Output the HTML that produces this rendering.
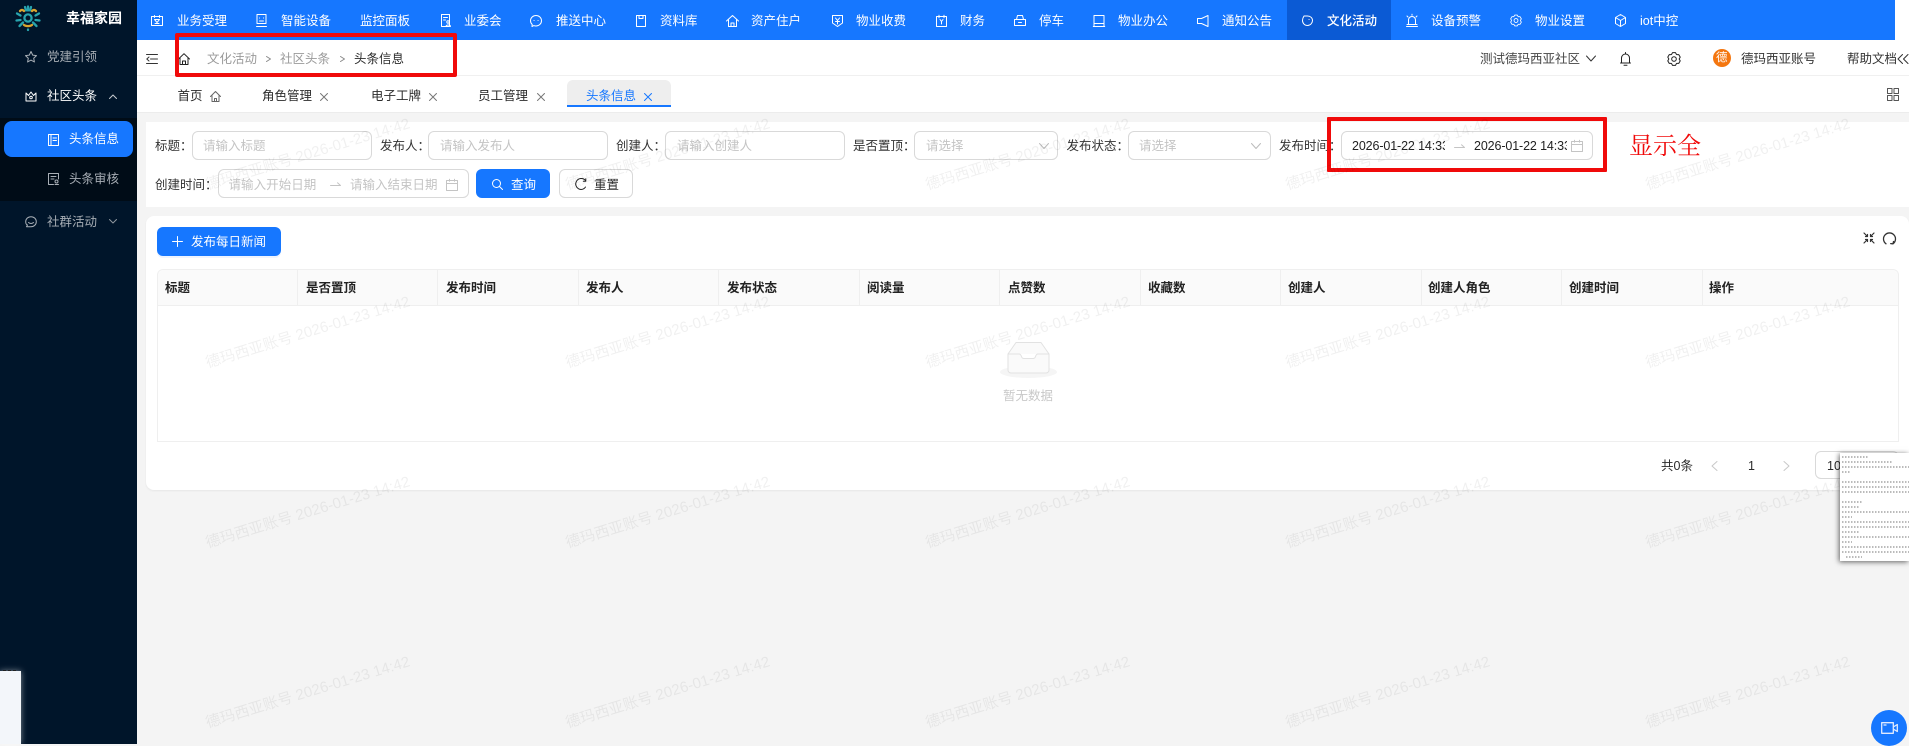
<!DOCTYPE html>
<html lang="zh"><head><meta charset="utf-8"><title>头条信息</title>
<style>
html,body{margin:0;padding:0}
body{width:1909px;height:744px;position:relative;overflow:hidden;background:#f4f4f4;font-family:"Liberation Sans","Noto Sans CJK SC",sans-serif;font-size:12.5px;color:#2b2b2b}
.a{position:absolute;box-sizing:border-box}
.t{position:absolute;line-height:0;white-space:nowrap}
svg{position:absolute;overflow:visible;fill:none;stroke:currentColor;stroke-width:1;stroke-linecap:round;stroke-linejoin:round}
.w{color:#fff}.ph{color:#c4c4c4}.g{color:#9a9a9a}
.inp{position:absolute;box-sizing:border-box;background:#fff;border:1px solid #d9d9d9;border-radius:6px;height:29px;top:131px}
.r2{top:169px}
.b{font-weight:700;color:#222}
.sep{position:absolute;top:270px;width:1px;height:36px;background:#efefef}
.wm{position:absolute;width:260px;height:20px;line-height:20px;text-align:center;font-size:15px;color:rgba(0,0,0,.06);transform:rotate(-17deg);white-space:nowrap;pointer-events:none}
</style></head><body>

<!-- sidebar -->
<div class="a" style="left:0;top:0;width:137px;height:744px;background:#00152a"></div>
<div class="a" style="left:0;top:118px;width:137px;height:83px;background:#000c17"></div>
<div class="a" style="left:4px;top:121px;width:129px;height:36px;border-radius:8px;background:#1677ff"></div>
<svg style="left:15px;top:5px;stroke-width:2.3" width="26" height="26" viewBox="0 0 26 26">
<circle cx="13" cy="13" r="3.6" stroke="#27a3ad"/>
<path d="M10 2l1 3.500M13 1.500v4M16 2l-1 3.500M2 8.500l3.500 2M24 8.500l-3.500 2" stroke="#27a3ad"/>
<path d="M5 6c1.500-1.500 2.500-1.500 4 0M17 6c1.500-1.500 2.500-1.500 4 0" stroke="#d9a530"/>
<path d="M1.500 15.500l4-.5M24.500 15.500l-4-.5M4.500 21l3.500-3.500M21.500 21L18 17.500" stroke="#27a3ad"/>
<path d="M9 20c2 1.500 6 1.500 8 0" stroke="#d9a530"/><path d="M13 24.500v.5" stroke="#27a3ad"/>
</svg>
<span class="t w" style="left:66px;top:18px;font-size:14px;font-weight:700">幸福家园</span>
<svg style="left:25px;top:51px;color:#a9b0b7" width="12" height="12" viewBox="0 0 12 12"><path d="M6 .5l1.700 3.600 3.800.5-2.800 2.600.7 3.800L6 9.100 2.600 11l.7-3.800L.5 4.600l3.800-.5z"/></svg>
<span class="t" style="left:47px;top:57px;color:#a6adb4">党建引领</span>
<svg style="left:25px;top:91px;color:#fff" width="12" height="11" viewBox="0 0 12 11"><path d="M1 2l2.500 2.500L6 1l2.500 3.500L11 2v8H1z"/><circle cx="6" cy="6.500" r="1.300"/></svg>
<span class="t w" style="left:47px;top:96px">社区头条</span>
<svg style="left:109px;top:94px;color:#c5cad0" width="8" height="5" viewBox="0 0 8 5"><path d="M.5 4.500L4 1l3.500 3.500"/></svg>
<svg style="left:48px;top:134px;color:#fff" width="11" height="12" viewBox="0 0 11 12"><path d="M.5.500h10v11H.5zM3 .5v11M5 4h3.500M5 6.500h3.500"/></svg>
<span class="t w" style="left:69px;top:139px">头条信息</span>
<svg style="left:48px;top:173px;color:#a9b0b7" width="11" height="12" viewBox="0 0 11 12"><path d="M10.500 6V.5H.5v11h5M3 3.500h5M3 6h3"/><circle cx="8.500" cy="8.500" r="1.500"/><path d="M7 11.500h3.500"/></svg>
<span class="t" style="left:69px;top:179px;color:#a6adb4">头条审核</span>
<svg style="left:25px;top:216px;color:#a9b0b7" width="12" height="12" viewBox="0 0 12 12"><path d="M6 .7c3 0 5.300 2.200 5.300 5s-2.300 5-5.300 5H1.500l1-1.700C1.200 8.500.7 7.200.7 5.700.7 2.900 3 .7 6 .7zM3.500 6.500c1.500 1.200 3.500 1.200 5 0"/></svg>
<span class="t" style="left:47px;top:222px;color:#a6adb4">社群活动</span>
<svg style="left:109px;top:219px;color:#8f979f" width="8" height="5" viewBox="0 0 8 5"><path d="M.5.500L4 4 7.500.5"/></svg>
<div class="a" style="left:0;top:671px;width:21px;height:73px;background:#f3f6fa;box-shadow:0 0 6px rgba(255,255,255,.5)"></div>
<div class="a" style="left:3px;top:670px;width:15px;height:1px;background:repeating-linear-gradient(90deg,#222 0 3px,transparent 3px 5px)"></div>

<!-- top nav -->
<div class="a" style="left:137px;top:0;width:1758px;height:40px;background:#1677ff"></div>
<div class="a" style="left:1287px;top:0;width:104px;height:40px;background:#0b5ad4"></div>
<div class="a" style="left:1895px;top:0;width:14px;height:40px;background:#fff"></div>
<div class="a w" style="left:0;top:0;width:0;height:0">
<svg style="left:151px;top:15px" width="12" height="11" viewBox="0 0 12 11"><path d="M.5 1.500h11v9H.5zM3.500.5v2M8.500.5v2M3.500 4.500h5l-2.500 3zM4 8.500h4"/></svg>
<span class="t" style="left:177px;top:21px">业务受理</span>
<svg style="left:256px;top:14px" width="11" height="13" viewBox="0 0 11 13"><path d="M1 .5h9v9H1zM.5 12.500h10M3.500 4h.1M7.500 4h.1M3.500 7h4"/></svg>
<span class="t" style="left:281px;top:21px">智能设备</span>
<span class="t" style="left:360px;top:21px">监控面板</span>
<svg style="left:441px;top:14px" width="10" height="13" viewBox="0 0 10 13"><path d="M.5.500h8v12H.5zM2.500 3.500h4M2.500 6h2"/><circle cx="7" cy="8" r="1.200"/><path d="M5 12.500c0-2 4.500-2 4.500 0"/></svg>
<span class="t" style="left:464px;top:21px">业委会</span>
<svg style="left:530px;top:15px" width="12" height="12" viewBox="0 0 12 12"><path d="M6 .5c3 0 5.500 2.300 5.500 5.200S9 11 6 11c-.8 0-1.500-.1-2.200-.4L2 11.500l.2-2C1.200 8.500.5 7.200.5 5.700.5 2.800 3 .5 6 .5zM4 5.500h.1M8 5.500h.1"/></svg>
<span class="t" style="left:556px;top:21px">推送中心</span>
<svg style="left:636px;top:15px" width="10" height="12" viewBox="0 0 10 12"><path d="M.5.500h9v11H.5zM3 .5v3h4v-3"/></svg>
<span class="t" style="left:660px;top:21px">资料库</span>
<svg style="left:726px;top:15px" width="13" height="12" viewBox="0 0 13 12"><path d="M.5 6l6-5.500 6 5.500M2.500 5v6.500h8V5M5 11.500V8h3v3.500"/></svg>
<span class="t" style="left:751px;top:21px">资产住户</span>
<svg style="left:832px;top:15px" width="11" height="12" viewBox="0 0 11 12"><path d="M.5.500h10v7.500l-5 3.500-5-3.500zM3.500 3l2 2.500 2-2.500M5.500 5.500v3.500M3.500 6.500h4"/></svg>
<span class="t" style="left:856px;top:21px">物业收费</span>
<svg style="left:936px;top:15px" width="11" height="12" viewBox="0 0 11 12"><path d="M.5 1.500h10v10H.5zM3 .3v2.500M8 .3v2.500M4 4.500l1.500 2 1.500-2M5.500 6.500v2.500"/></svg>
<span class="t" style="left:960px;top:21px">财务</span>
<svg style="left:1014px;top:15px" width="12" height="11" viewBox="0 0 12 11"><path d="M2.500 4.500L3.500.5h5l1 4M.5 4.500h11v6H.5zM4.500 7.500h3"/></svg>
<span class="t" style="left:1039px;top:21px">停车</span>
<svg style="left:1093px;top:15px" width="12" height="12" viewBox="0 0 12 12"><path d="M1 .5h10v8H1zM.3 11.500h11.400M1 9v2.500M11 9v2.500"/></svg>
<span class="t" style="left:1118px;top:21px">物业办公</span>
<svg style="left:1197px;top:15px" width="12" height="12" viewBox="0 0 12 12"><path d="M11 .5v11L4.500 8.500H.5v-5h4z"/></svg>
<span class="t" style="left:1222px;top:21px">通知公告</span>
<svg style="left:1302px;top:15px" width="11" height="11" viewBox="0 0 11 11"><path d="M2 1h3.500c3 0 5 2 5 4.500s-2.200 5-5 5-5-2.200-5-5c0-1.500.5-3 1.500-4.500zM7 4.500h.1"/></svg>
<span class="t" style="left:1327px;top:21px;font-weight:500">文化活动</span>
<svg style="left:1406px;top:14px" width="12" height="13" viewBox="0 0 12 13"><path d="M2.500 10V6a3.500 3.500 0 017 0v4M1 10.500h10M.5 12.500h11M6 .3v1M1 2l1 1M11 2l-1 1"/></svg>
<span class="t" style="left:1431px;top:21px">设备预警</span>
<svg style="left:1510px;top:14px" width="12" height="13" viewBox="0 0 14 14"><path d="M5.540.67h2.920l.98 1.740.32.180 2 -.02 1.460 2.530-1 1.720v.36l1 1.720-1.460 2.530-2-.02-.32.180-.98 1.740H5.540l-.98-1.740-.32-.180-2 .02L.78 8.900l1-1.720v-.36l-1-1.720 1.470-2.530 2 .02.32-.180z"/><circle cx="7" cy="7" r="2.300"/></svg>
<span class="t" style="left:1535px;top:21px">物业设置</span>
<svg style="left:1615px;top:14px" width="11" height="13" viewBox="0 0 11 13"><path d="M5.500.5l5 3v6l-5 3-5-3v-6zM.5 3.500l5 3 5-3M5.500 6.500v6"/></svg>
<span class="t" style="left:1640px;top:21px">iot中控</span>
</div>

<!-- breadcrumb row -->
<div class="a" style="left:137px;top:40px;width:1772px;height:36px;background:#fff;border-bottom:1px solid #f0f0f0"></div>
<svg style="left:146px;top:54px;color:#333" width="12" height="10" viewBox="0 0 12 10"><path d="M.5.500h11M4.500 5h7M.5 9.500h11M3 3L.8 5 3 7"/></svg>
<svg style="left:178px;top:53px;color:#222" width="12" height="12" viewBox="0 0 12 12"><path d="M.5 6L6 .7 11.500 6M2 5v6.500h8V5M4.500 11.500V8h3v3.500"/></svg>
<span class="t g" style="left:207px;top:59px">文化活动</span>
<svg style="left:266px;top:56px;color:#888" width="5" height="6" viewBox="0 0 5 6"><path d="M.5.500L4.500 3 .5 5.500"/></svg>
<span class="t g" style="left:280px;top:59px">社区头条</span>
<svg style="left:340px;top:56px;color:#888" width="5" height="6" viewBox="0 0 5 6"><path d="M.5.500L4.500 3 .5 5.500"/></svg>
<span class="t" style="left:354px;top:59px">头条信息</span>
<span class="t" style="left:1480px;top:59px;color:#444">测试德玛西亚社区</span>
<svg style="left:1586px;top:55px;color:#333" width="10" height="7" viewBox="0 0 10 7"><path d="M.5 1L5 6l4.500-5"/></svg>
<svg style="left:1620px;top:52px;color:#222" width="11" height="14" viewBox="0 0 11 14"><path d="M1.500 10.500V6a4 4 0 018 0v4.500M.5 11h10M4 13.300h3M5.500.5v1.500"/></svg>
<svg style="left:1667px;top:52px;color:#222" width="14" height="14" viewBox="0 0 14 14"><path d="M5.540.67h2.920l.98 1.740.32.180 2 -.02 1.460 2.530-1 1.720v.36l1 1.720-1.460 2.530-2-.02-.32.180-.98 1.740H5.540l-.98-1.740-.32-.180-2 .02L.78 8.900l1-1.720v-.36l-1-1.720 1.470-2.530 2 .02.32-.180z"/><circle cx="7" cy="7" r="2.300"/></svg>
<div class="a" style="left:1713px;top:49px;width:18px;height:18px;border-radius:50%;background:#f4760f"></div>
<span class="t w" style="left:1716px;top:58px;font-size:11.500px">德</span>
<span class="t" style="left:1741px;top:59px;color:#333">德玛西亚账号</span>
<span class="t" style="left:1847px;top:59px;color:#333">帮助文档</span>
<svg style="left:1897px;top:54px;color:#333" width="12" height="10" viewBox="0 0 12 10"><path d="M5.500.5L1 5l4.500 4.500M11 .5L6.500 5l4.500 4.500"/></svg>

<!-- tabs row -->
<div class="a" style="left:137px;top:76px;width:1772px;height:37px;background:#fff;border-bottom:1px solid #ececec"></div>
<span class="t" style="left:177.500px;top:96px">首页</span>
<svg style="left:210px;top:91px;color:#666" width="11" height="11" viewBox="0 0 11 11"><path d="M.5 5.500l5-5 5 5M2 4.500v6h7v-6M4.500 10.500V7.500h2v3"/></svg>
<span class="t" style="left:262px;top:96px">角色管理</span>
<svg style="left:320px;top:93px;color:#777" width="8" height="8" viewBox="0 0 8 8"><path d="M.5.500l7 7M7.500.5l-7 7"/></svg>
<span class="t" style="left:371px;top:96px">电子工牌</span>
<svg style="left:429px;top:93px;color:#777" width="8" height="8" viewBox="0 0 8 8"><path d="M.5.500l7 7M7.500.5l-7 7"/></svg>
<span class="t" style="left:478px;top:96px">员工管理</span>
<svg style="left:537px;top:93px;color:#777" width="8" height="8" viewBox="0 0 8 8"><path d="M.5.500l7 7M7.500.5l-7 7"/></svg>
<div class="a" style="left:567px;top:80px;width:104px;height:27px;background:#eee;border-radius:6px 6px 0 0;border-bottom:2px solid #1677ff"></div>
<span class="t" style="left:586px;top:95.500px;color:#1677ff">头条信息</span>
<svg style="left:644px;top:93px;color:#1677ff" width="8" height="8" viewBox="0 0 8 8"><path d="M.5.500l7 7M7.500.5l-7 7"/></svg>
<svg style="left:1887px;top:88px;color:#555" width="12" height="13" viewBox="0 0 12 13"><path d="M.5.500h4.500v5H.5zM7 .5h4.500v5H7zM.5 7.500h4.500v5H.5zM7 7.500h4.500v5H7z"/></svg>

<!-- filter card -->
<div class="a" style="left:146px;top:122px;width:1763px;height:85px;background:#fff"></div>
<span class="t" style="left:155px;top:146px;color:#333">标题：</span>
<div class="inp" style="left:192px;width:180px"></div><span class="t ph" style="left:203px;top:146px">请输入标题</span>
<span class="t" style="left:380px;top:146px;color:#333">发布人：</span>
<div class="inp" style="left:428px;width:180px"></div><span class="t ph" style="left:440px;top:146px">请输入发布人</span>
<span class="t" style="left:616px;top:146px;color:#333">创建人：</span>
<div class="inp" style="left:665px;width:180px"></div><span class="t ph" style="left:677px;top:146px">请输入创建人</span>
<span class="t" style="left:853px;top:146px;color:#333">是否置顶：</span>
<div class="inp" style="left:914px;width:144px"></div><span class="t ph" style="left:926px;top:146px">请选择</span>
<svg style="left:1039px;top:143px;color:#bbb" width="10" height="6" viewBox="0 0 10 6"><path d="M.5.500L5 5.500 9.500.5"/></svg>
<span class="t" style="left:1066.500px;top:146px;color:#333">发布状态：</span>
<div class="inp" style="left:1128px;width:143px"></div><span class="t ph" style="left:1139px;top:146px">请选择</span>
<svg style="left:1251px;top:143px;color:#bbb" width="10" height="6" viewBox="0 0 10 6"><path d="M.5.500L5 5.500 9.500.5"/></svg>
<span class="t" style="left:1279px;top:146px;color:#333">发布时间：</span>
<div class="inp" style="left:1341px;width:252px"></div>
<div class="a" style="left:1352px;top:135px;width:93px;height:22px;overflow:hidden"><span class="t" style="left:0;top:11px;color:#222;letter-spacing:-.12px">2026-01-22 14:33:00</span></div>
<svg style="left:1454px;top:144px;color:#c4c4c4" width="11" height="4" viewBox="0 0 11 4"><path d="M.5 3.500h10L7.500.8"/></svg>
<div class="a" style="left:1474px;top:135px;width:93px;height:22px;overflow:hidden"><span class="t" style="left:0;top:11px;color:#222;letter-spacing:-.12px">2026-01-22 14:33:00</span></div>
<svg style="left:1571px;top:140px;color:#c4c4c4" width="12" height="12" viewBox="0 0 12 12"><path d="M.5 1.500h11v10H.5zM.5 4.500h11M3.500.3v2M8.500.3v2"/></svg>
<div class="a" style="left:1327px;top:117px;width:280px;height:55px;border:4px solid #f00a0a;border-radius:1px"></div>
<span class="t" style="left:1629px;top:147px;font-family:'Liberation Serif','Noto Serif CJK SC',serif;font-size:24px;color:#f00a0a">显示全</span>

<span class="t" style="left:155px;top:184.500px;color:#333">创建时间：</span>
<div class="inp r2" style="left:217.500px;width:251px"></div>
<span class="t ph" style="left:228.500px;top:184.500px;font-size:12.500px;letter-spacing:.05px">请输入开始日期</span>
<svg style="left:330px;top:182px;color:#c4c4c4" width="11" height="4" viewBox="0 0 11 4"><path d="M.5 3.500h10L7.500.8"/></svg>
<span class="t ph" style="left:350px;top:184.500px">请输入结束日期</span>
<svg style="left:446px;top:179px;color:#c4c4c4" width="12" height="12" viewBox="0 0 12 12"><path d="M.5 1.500h11v10H.5zM.5 4.500h11M3.500.3v2M8.500.3v2"/></svg>
<div class="a" style="left:476px;top:169px;width:74px;height:29px;background:#1677ff;border-radius:6px"></div>
<svg style="left:492px;top:179px;color:#fff" width="11" height="11" viewBox="0 0 11 11"><circle cx="4.500" cy="4.500" r="4"/><path d="M7.500 7.500l3 3"/></svg>
<span class="t w" style="left:511px;top:184.500px">查询</span>
<div class="a" style="left:559px;top:169px;width:74px;height:29px;background:#fff;border:1px solid #d9d9d9;border-radius:6px"></div>
<svg style="left:575px;top:178px;color:#222" width="12" height="12" viewBox="0 0 12 12"><path d="M10.500 2.500A5.500 5.500 0 106 11.500a5.500 5.500 0 004.500-2.500M10.800.8v2.500H8.300"/></svg>
<span class="t" style="left:594px;top:184.500px">重置</span>

<!-- table card -->
<div class="a" style="left:146px;top:216px;width:1763px;height:274px;background:#fff;border-radius:8px;box-shadow:0 1px 2px rgba(0,0,0,.06)"></div>
<div class="a" style="left:157px;top:227px;width:124px;height:29px;background:#1677ff;border-radius:6px;box-shadow:0 2px 0 rgba(22,119,255,.08)"></div>
<svg style="left:172px;top:236px;color:#fff" width="11" height="11" viewBox="0 0 11 11"><path d="M5.500.5v10M.5 5.500h10"/></svg>
<span class="t w" style="left:191px;top:242px">发布每日新闻</span>
<svg style="left:1863px;top:232px;color:#333;stroke-width:1.200" width="12" height="12" viewBox="0 0 12 12"><path d="M1 1l3.500 3.500M11 1L7.500 4.500M1 11l3.500-3.500M11 11L7.500 7.500M2.500 4.500h2v-2M9.500 4.500h-2v-2M2.500 7.500h2v2M9.500 7.500h-2v2"/></svg>
<svg style="left:1883px;top:232px;color:#333;stroke-width:1.300" width="13" height="13" viewBox="0 0 13 13"><path d="M3 11.800A6 6 0 1 1 10 11.800M10.500 9.500l-.5 2.300-2.300-.2"/></svg>

<div class="a" style="left:157px;top:269px;width:1742px;height:173px;border:1px solid #efefef;border-radius:6px 6px 0 0"></div>
<div class="a" style="left:158px;top:270px;width:1740px;height:36px;background:#fafafa;border-bottom:1px solid #efefef;border-radius:6px 6px 0 0"></div>
<div class="sep" style="left:297px"></div><div class="sep" style="left:437px"></div><div class="sep" style="left:578px"></div><div class="sep" style="left:718px"></div><div class="sep" style="left:859px"></div><div class="sep" style="left:999px"></div><div class="sep" style="left:1140px"></div><div class="sep" style="left:1280px"></div><div class="sep" style="left:1421px"></div><div class="sep" style="left:1561px"></div><div class="sep" style="left:1702px"></div>
<span class="t b" style="left:165px;top:288px">标题</span>
<span class="t b" style="left:306px;top:288px">是否置顶</span>
<span class="t b" style="left:446px;top:288px">发布时间</span>
<span class="t b" style="left:586px;top:288px">发布人</span>
<span class="t b" style="left:727px;top:288px">发布状态</span>
<span class="t b" style="left:867px;top:288px">阅读量</span>
<span class="t b" style="left:1008px;top:288px">点赞数</span>
<span class="t b" style="left:1148px;top:288px">收藏数</span>
<span class="t b" style="left:1288px;top:288px">创建人</span>
<span class="t b" style="left:1428px;top:288px">创建人角色</span>
<span class="t b" style="left:1569px;top:288px">创建时间</span>
<span class="t b" style="left:1709px;top:288px">操作</span>

<svg style="left:1000px;top:342px;stroke:#e2e2e2" width="57" height="36" viewBox="0 0 57 36">
<ellipse cx="28.500" cy="30" rx="28.500" ry="6" fill="#f5f5f5" stroke="none"/>
<path d="M8 12L16 .5h25L49 12v16a3 3 0 01-3 3H11a3 3 0 01-3-3z" fill="#fafafa"/>
<path d="M8 12h11c1.500 0 2 1 2.500 2.500.4 1.500 1 2 2.500 2h9c1.500 0 2.100-.5 2.500-2C36 13 36.500 12 38 12h11" fill="#fff"/>
</svg>
<span class="t" style="left:1003px;top:396px;color:#c8c8c8">暂无数据</span>

<span class="t" style="left:1661px;top:465.500px">共0条</span>
<svg style="left:1711px;top:461px;color:#c8c8c8" width="7" height="10" viewBox="0 0 7 10"><path d="M6 .5L1 5l5 4.500"/></svg>
<span class="t" style="left:1748px;top:466px">1</span>
<svg style="left:1783px;top:461px;color:#c8c8c8" width="7" height="10" viewBox="0 0 7 10"><path d="M1 .5L6 5 1 9.500"/></svg>
<div class="a" style="left:1815px;top:451px;width:84px;height:28px;background:#fff;border:1px solid #d9d9d9;border-radius:6px"></div>
<span class="t" style="left:1827px;top:466px">10</span>

<!-- watermarks -->
<div class="wm" style="left:178px;top:145px">德玛西亚账号 2026-01-23 14:42</div><div class="wm" style="left:538px;top:145px">德玛西亚账号 2026-01-23 14:42</div><div class="wm" style="left:898px;top:145px">德玛西亚账号 2026-01-23 14:42</div><div class="wm" style="left:1258px;top:145px">德玛西亚账号 2026-01-23 14:42</div><div class="wm" style="left:1618px;top:145px">德玛西亚账号 2026-01-23 14:42</div>
<div class="wm" style="left:178px;top:323px">德玛西亚账号 2026-01-23 14:42</div><div class="wm" style="left:538px;top:323px">德玛西亚账号 2026-01-23 14:42</div><div class="wm" style="left:898px;top:323px">德玛西亚账号 2026-01-23 14:42</div><div class="wm" style="left:1258px;top:323px">德玛西亚账号 2026-01-23 14:42</div><div class="wm" style="left:1618px;top:323px">德玛西亚账号 2026-01-23 14:42</div>
<div class="wm" style="left:178px;top:503px">德玛西亚账号 2026-01-23 14:42</div><div class="wm" style="left:538px;top:503px">德玛西亚账号 2026-01-23 14:42</div><div class="wm" style="left:898px;top:503px">德玛西亚账号 2026-01-23 14:42</div><div class="wm" style="left:1258px;top:503px">德玛西亚账号 2026-01-23 14:42</div><div class="wm" style="left:1618px;top:503px">德玛西亚账号 2026-01-23 14:42</div>
<div class="wm" style="left:178px;top:683px">德玛西亚账号 2026-01-23 14:42</div><div class="wm" style="left:538px;top:683px">德玛西亚账号 2026-01-23 14:42</div><div class="wm" style="left:898px;top:683px">德玛西亚账号 2026-01-23 14:42</div><div class="wm" style="left:1258px;top:683px">德玛西亚账号 2026-01-23 14:42</div><div class="wm" style="left:1618px;top:683px">德玛西亚账号 2026-01-23 14:42</div>

<!-- red breadcrumb highlight -->
<div class="a" style="left:175px;top:33px;width:282px;height:44px;border:4px solid #f00a0a;border-radius:2px"></div>

<!-- thumbnail -->
<div class="a" style="left:1840px;top:453px;width:69px;height:108px;background:#fff;box-shadow:-1px 1px 5px rgba(0,0,0,.6)"></div>
<svg style="left:1842px;top:456px;color:#777;stroke-linecap:butt" width="67" height="104" viewBox="0 0 67 104" stroke-dasharray="1.500 1.500">
<path d="M0 1h26M0 6h50M0 11h67M0 16h8M0 26h67M0 31h67M0 36h67M0 46h20M0 51h18M0 56h67M0 61h10M0 66h67M0 71h67M0 76h18M0 81h67M0 86h10M0 91h67M0 96h67M4 101h16"/>
</svg>

<!-- float button -->
<div class="a" style="left:1871px;top:710px;width:36px;height:36px;border-radius:50%;background:#1677ff"></div>
<svg style="left:1881px;top:722px;color:#dfeaff;stroke-width:1.300" width="17" height="12" viewBox="0 0 17 12"><path d="M.7.700h11.600v10.600H.7zM12.300 5l4-2.500v7l-4-2.500M3 3h2"/></svg>
</body></html>
